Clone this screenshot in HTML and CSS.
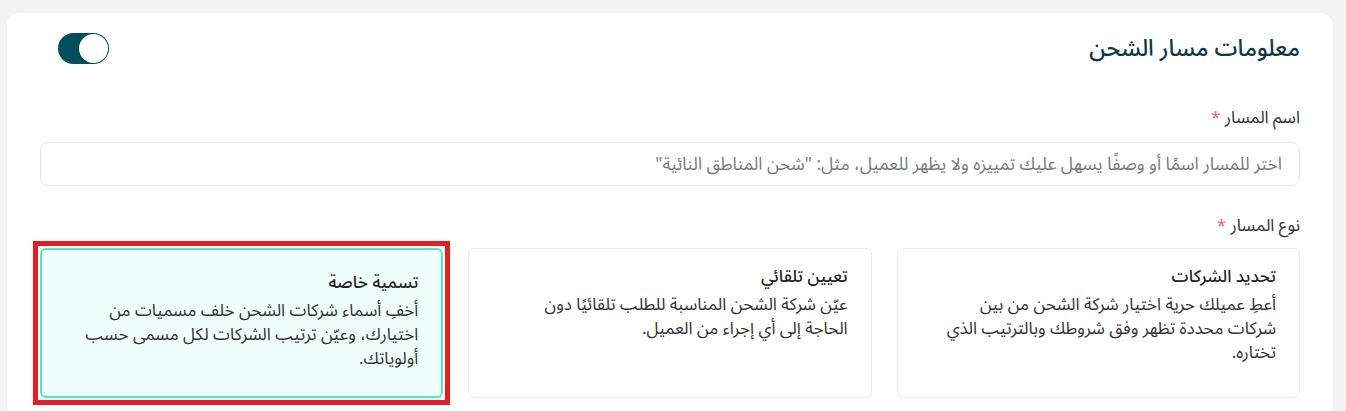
FILE: index.html
```html
<!DOCTYPE html>
<html lang="ar" dir="rtl">
<head>
<meta charset="utf-8">
<link rel="stylesheet" href="styles.css">
</head>
<body>
<main class="panel">
  <header class="panel-head">
    <h2 class="panel-title">معلومات مسار الشحن</h2>
    <span class="toggle" role="switch" aria-checked="true"><span class="knob"></span></span>
  </header>

  <div class="field">
    <label class="field-label">اسم المسار <span class="req">*</span></label>
    <div class="input">اختر للمسار اسمًا أو وصفًا يسهل عليك تمييزه ولا يظهر للعميل، مثل: "شحن المناطق النائية"</div>
  </div>

  <div class="field field-type">
    <label class="field-label">نوع المسار <span class="req">*</span></label>
    <div class="options">
      <div class="option">
        <div class="option-title">تحديد الشركات</div>
        <p class="option-desc">أعطِ عميلك حرية اختيار شركة الشحن من بين<br>شركات محددة تظهر وفق شروطك وبالترتيب الذي<br>تختاره.</p>
      </div>
      <div class="option">
        <div class="option-title">تعيين تلقائي</div>
        <p class="option-desc">عيّن شركة الشحن المناسبة للطلب تلقائيًا دون<br>الحاجة إلى أي إجراء من العميل.</p>
      </div>
      <div class="option option-selected">
        <div class="option-title">تسمية خاصة</div>
        <p class="option-desc">أخفِ أسماء شركات الشحن خلف مسميات من<br>اختيارك، وعيّن ترتيب الشركات لكل مسمى حسب<br>أولوياتك.</p>
      </div>
    </div>
  </div>
</main>
</body>
</html>
```

FILE: styles.css
```css
html, body {
  margin: 0;
  padding: 0;
  background: #f3f3f3;
  height: 100%;
  overflow: hidden;
}
body {
  padding: 13px 13px 0 7px;
  box-sizing: border-box;
  font-family: "Noto Sans Arabic", "Noto Sans", "DejaVu Sans", sans-serif;
  color: #2b2b2b;
}
.panel {
  background: #fff;
  border-radius: 12px;
  padding: 20px 33px 40px 33px;
  min-height: 500px;
}
.panel-head {
  display: flex;
  align-items: center;
  justify-content: space-between;
  padding-left: 18px;
  height: 31px;
}
.panel-title {
  margin: 0;
  font-size: 23px;
  font-weight: 500;
  color: #0a3a44;
}
.toggle {
  width: 51px;
  height: 31px;
  border-radius: 16px;
  background: #024f5b;
  display: flex;
  align-items: center;
  justify-content: flex-start;
  padding: 0 1px;
  box-sizing: border-box;
}
.knob {
  width: 29px;
  height: 29px;
  border-radius: 50%;
  background: #fff;
  box-shadow: -1px 0 2px rgba(0,0,0,0.15);
}
.field {
  margin-top: 42px;
}
.field-type {
  margin-top: 28px;
}
.field-label {
  display: block;
  font-size: 17px;
  color: #333;
  line-height: 24px;
  margin-bottom: 12px;
}
.field-type .field-label {
  margin-bottom: 10px;
}
.req {
  color: #f2696b;
}
.input {
  height: 44px;
  border: 1px solid #e6e6e6;
  border-radius: 8px;
  box-sizing: border-box;
  padding: 0 17px;
  display: flex;
  align-items: center;
  font-size: 17.5px;
  color: #7a7a7a;
}
.options {
  display: grid;
  grid-template-columns: repeat(3, 1fr);
  gap: 25px;
}
.option {
  position: relative;
  border: 1px solid #ececec;
  border-radius: 6px;
  height: 150px;
  box-sizing: border-box;
  padding: 16px 23px 10px;
}
.option-title {
  font-size: 17px;
  font-weight: 500;
  color: #222;
  line-height: 24px;
  margin-bottom: 4px;
}
.option-desc {
  margin: 0;
  font-size: 17px;
  line-height: 24px;
  color: #333;
}
.option-selected {
  background: #effefa;
  border: 2px solid #4fe8c4;
  padding-top: 21px;
}
.option-selected::after {
  content: "";
  position: absolute;
  top: -9px;
  right: -9px;
  bottom: -9px;
  left: -9px;
  border: 5px solid #e51e25;
  pointer-events: none;
}
```
